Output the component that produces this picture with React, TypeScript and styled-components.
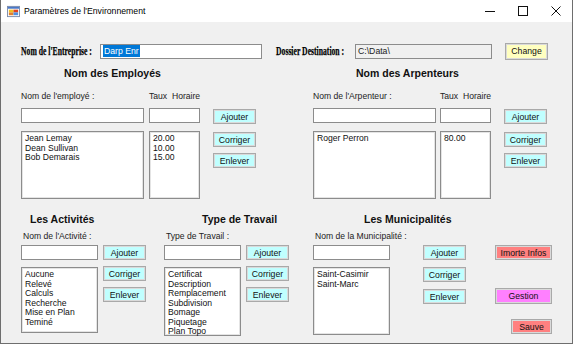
import React from "react";
import styled, { createGlobalStyle } from "styled-components";

const Global = createGlobalStyle`
  html, body { margin: 0; padding: 0; background: #ffffff; }
  body { font-family: "Liberation Sans", Arial, sans-serif; }
  * { box-sizing: border-box; }
`;

const Window = styled.div`
  width: 573px;
  height: 344px;
  display: flex;
  flex-direction: column;
  background: #f0f0f0;
  border: 1px solid #6e6e6e;
  border-top: none;
  overflow: hidden;
`;

const TitleBar = styled.div`
  height: 22px;
  flex: none;
  background: #ffffff;
  display: flex;
  align-items: center;
  padding-left: 6px;
`;

const TitleText = styled.span`
  font-family: "Liberation Sans", Arial, sans-serif;
  font-size: 8.7px;
  color: #000;
  margin-left: 4px;
`;

const Controls = styled.div`
  margin-left: auto;
  display: flex;
  align-items: center;
  height: 22px;
`;

const Ctrl = styled.div`
  width: 33px;
  height: 22px;
  display: flex;
  align-items: center;
  justify-content: center;
`;

const Body = styled.div`
  flex: 1;
  display: flex;
  flex-direction: column;
  padding-left: 20px;
`;

const TopRow = styled.div`
  margin-top: 21px;
  height: 16px;
  display: flex;
  align-items: center;
`;

const FancyLabel = styled.span<{ $w: number }>`
  display: inline-block;
  width: ${(p) => p.$w}px;
  font-family: "Liberation Serif", "Times New Roman", serif;
  font-weight: bold;
  font-size: 12px;
  white-space: nowrap;
  transform: scaleX(0.64);
  transform-origin: left center;
  color: #000;
  -webkit-text-stroke: 0.25px #000;
`;

const TextBox = styled.div<{ $w: number; $ro?: boolean }>`
  width: ${(p) => p.$w}px;
  height: 15px;
  flex: none;
  background: ${(p) => (p.$ro ? "#f0f0f0" : "#ffffff")};
  border: 1px solid #8c8c8c;
  font-size: 8.7px;
  line-height: 13px;
  padding-left: 2px;
  color: #222;
  white-space: nowrap;
  overflow: hidden;
`;

const Selected = styled.span`
  background: #0078d7;
  color: #ffffff;
  padding: 1px 1px;
`;

const Btn = styled.div<{ $w?: number; $bg?: string }>`
  width: ${(p) => p.$w ?? 43}px;
  height: 15px;
  flex: none;
  background: ${(p) => p.$bg ?? "#c0ffff"};
  border: 1px solid #a9a9a9;
  box-shadow: inset 0 0 0 1px #dadada;
  font-size: 8.7px;
  color: #111;
  display: flex;
  align-items: center;
  justify-content: center;
  white-space: nowrap;
`;

const ListBox = styled.div<{ $w: number; $h: number }>`
  width: ${(p) => p.$w}px;
  height: ${(p) => p.$h}px;
  flex: none;
  background: #ffffff;
  border: 1px solid #8c8c8c;
  box-shadow: inset 0 0 0 1px #e4e4e4;
  padding: 2px 3px;
  font-size: 8.6px;
  line-height: 9.5px;
  color: #111;
  display: flex;
  flex-direction: column;
`;

const Header = styled.div<{ $indent: number }>`
  height: 14px;
  padding-left: ${(p) => p.$indent}px;
  font-weight: bold;
  font-size: 10.5px;
  line-height: 14px;
  color: #111;
  white-space: nowrap;
`;

const Label = styled.span<{ $w?: number }>`
  display: inline-block;
  width: ${(p) => (p.$w ? `${p.$w}px` : "auto")};
  font-size: 8.6px;
  color: #222;
  white-space: nowrap;
`;

const Row = styled.div<{ $top?: number }>`
  display: flex;
  align-items: flex-start;
  margin-top: ${(p) => p.$top ?? 0}px;
`;

const Col = styled.div<{ $gap: number; $top?: number }>`
  display: flex;
  flex-direction: column;
  gap: ${(p) => p.$gap}px;
  margin-top: ${(p) => p.$top ?? 0}px;
`;

const Spacer = styled.div<{ $w: number }>`
  width: ${(p) => p.$w}px;
  flex: none;
`;

const PeoplePanel = styled.div`
  width: 234px;
  display: flex;
  flex-direction: column;
`;

const UpperRow = styled.div`
  display: flex;
  margin-top: 7px;
  gap: 58px;
`;

const LowerRow = styled.div`
  display: flex;
  margin-top: 13px;
`;

const SmallPanel = styled.div<{ $w: number }>`
  width: ${(p) => p.$w}px;
  flex: none;
  display: flex;
  flex-direction: column;
`;

const ActionCol = styled.div`
  display: flex;
  flex-direction: column;
  align-items: flex-end;
  width: 57px;
  margin-top: 33px;
`;

function People({ title, indent, label, names, rates, taux }: { title: string; indent: number; label: string; names: string[]; rates: string[]; taux: number }) {
  return (
    <PeoplePanel>
      <Header $indent={indent}>{title}</Header>
      <Row $top={11}>
        <Label $w={taux}>{label}</Label>
        <Label>Taux&nbsp; Horaire</Label>
      </Row>
      <Row $top={7}>
        <TextBox $w={123} />
        <Spacer $w={taux - 123} />
        <TextBox $w={51} />
        <Spacer $w={13} />
        <Btn style={{ marginTop: 1 }}>Ajouter</Btn>
      </Row>
      <Row $top={7}>
        <ListBox $w={123} $h={68}>
          {names.map((n) => (
            <span key={n}>{n}</span>
          ))}
        </ListBox>
        <Spacer $w={taux - 123} />
        <ListBox $w={51} $h={68}>
          {rates.map((n, i) => (
            <span key={i}>{n}</span>
          ))}
        </ListBox>
        <Spacer $w={13} />
        <Col $gap={6} $top={1}>
          <Btn>Corriger</Btn>
          <Btn>Enlever</Btn>
        </Col>
      </Row>
    </PeoplePanel>
  );
}

function Small({ title, indent, label, items, w, btnGap, listH }: { title: string; indent: number; label: string; items: string[]; w: number; btnGap: number; listH: number }) {
  const wide = btnGap > 10;
  return (
    <SmallPanel $w={w}>
      <Header $indent={indent}>{title}</Header>
      <Row $top={5}>
        <Spacer $w={2} />
        <Label>{label}</Label>
      </Row>
      <Row $top={-1}>
        <Col $gap={7} $top={0}>
          <TextBox $w={77} style={{ marginTop: 5 }} />
          <ListBox $w={77} $h={listH}>
            {items.map((n) => (
              <span key={n}>{n}</span>
            ))}
          </ListBox>
        </Col>
        <Spacer $w={btnGap} />
        <Col $gap={wide ? 7 : 6} $top={5}>
          <Btn>Ajouter</Btn>
          <Btn>Corriger</Btn>
          <Btn>Enlever</Btn>
        </Col>
      </Row>
    </SmallPanel>
  );
}

export default function App() {
  return (
    <>
      <Global />
      <Window>
        <TitleBar>
          <svg width="13" height="13" viewBox="0 0 14 14">
            <rect x="0.5" y="1.5" width="13" height="11" fill="#fff" stroke="#7a8aa8" />
            <rect x="1" y="2" width="12" height="2" fill="#4a78c8" />
            <rect x="2" y="5" width="5" height="3" fill="#f0c020" />
            <rect x="7" y="5" width="5" height="3" fill="#e04020" />
            <rect x="2" y="8" width="5" height="3" fill="#e08030" />
            <rect x="7" y="8" width="5" height="3" fill="#5090e0" />
          </svg>
          <TitleText>Paramètres de l'Environnement</TitleText>
          <Controls>
            <Ctrl>
              <svg width="10" height="10" viewBox="0 0 10 10">
                <line x1="0" y1="5.5" x2="10" y2="5.5" stroke="#111" strokeWidth="1" />
              </svg>
            </Ctrl>
            <Ctrl>
              <svg width="10" height="10" viewBox="0 0 10 10">
                <rect x="0.5" y="0.5" width="9" height="9" fill="none" stroke="#111" strokeWidth="1" />
              </svg>
            </Ctrl>
            <Ctrl>
              <svg width="10" height="10" viewBox="0 0 10 10">
                <path d="M0.5 0.5 L9.5 9.5 M9.5 0.5 L0.5 9.5" stroke="#111" strokeWidth="1" />
              </svg>
            </Ctrl>
          </Controls>
        </TitleBar>
        <Body>
          <TopRow>
            <FancyLabel $w={79}>Nom de l'Entreprise :</FancyLabel>
            <TextBox $w={162}>
              <Selected>Darp Enr</Selected>
            </TextBox>
            <Spacer $w={14} />
            <FancyLabel $w={79}>Dossier Destination :</FancyLabel>
            <TextBox $w={137} $ro>
              C:\Data\
            </TextBox>
            <Spacer $w={13} />
            <Btn $w={43} $bg="#ffffc0" style={{ height: 17 }}>
              Change
            </Btn>
          </TopRow>
          <UpperRow>
            <People
              title="Nom des Employés"
              indent={43}
              label="Nom de l'employé :"
              names={["Jean Lemay", "Dean Sullivan", "Bob Demarais"]}
              rates={["20.00", "10.00", "15.00"]}
              taux={128}
            />
            <People
              title="Nom des Arpenteurs"
              indent={43}
              label="Nom de l'Arpenteur :"
              names={["Roger Perron"]}
              rates={["80.00"]}
              taux={127}
            />
          </UpperRow>
          <LowerRow>
            <Small title="Les Activités" indent={9} label="Nom de l'Activité :" items={["Aucune", "Relevé", "Calculs", "Recherche", "Mise en Plan", "Teminé"]} w={143} btnGap={5} listH={66} />
            <Small title="Type de Travail" indent={38} label="Type de Travail :" items={["Certificat", "Description", "Remplacement", "Subdivision", "Bomage", "Piquetage", "Plan Topo"]} w={149} btnGap={5} listH={69} />
            <Small title="Les Municipalités" indent={51} label="Nom de la Municipalité :" items={["Saint-Casimir", "Saint-Marc"]} w={182} btnGap={33} listH={68} />
            <ActionCol>
              <Btn $w={57} $bg="#ff8080">Imorte Infos</Btn>
              <Btn $w={57} $bg="#ff80ff" style={{ marginTop: 28, height: 16 }}>Gestion</Btn>
              <Btn $w={41} $bg="#ff8080" style={{ marginTop: 15 }}>Sauve</Btn>
            </ActionCol>
          </LowerRow>
        </Body>
      </Window>
    </>
  );
}
